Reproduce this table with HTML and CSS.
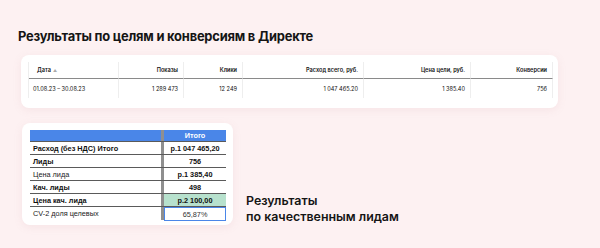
FILE: index.html
```html
<!DOCTYPE html>
<html lang="ru">
<head>
<meta charset="utf-8">
<link rel="stylesheet" href="styles.css">
</head>
<body>
<div class="page">
  <h1 class="title">Результаты по целям и конверсиям в Директе</h1>
  <div class="card report">
    <div class="grid">
      <div class="cell head left">Дата <span class="sort">▲</span></div>
      <div class="cell head">Показы</div>
      <div class="cell head">Клики</div>
      <div class="cell head">Расход всего, руб.</div>
      <div class="cell head">Цена цели, руб.</div>
      <div class="cell head">Конверсии</div>
      <div class="cell data left">01.08.23 – 30.08.23</div>
      <div class="cell data">1 289 473</div>
      <div class="cell data">12 249</div>
      <div class="cell data">1 047 465.20</div>
      <div class="cell data">1 385.40</div>
      <div class="cell data">756</div>
    </div>
  </div>
  <div class="bottom">
    <div class="card sheet">
      <div class="srow shead"><div class="c1"></div><div class="sep"></div><div class="c2">Итого</div></div>
      <div class="srow"><div class="c1 b">Расход (без НДС) Итого</div><div class="sep"></div><div class="c2 b">р.1 047 465,20</div></div>
      <div class="srow"><div class="c1 b">Лиды</div><div class="sep"></div><div class="c2 b">756</div></div>
      <div class="srow"><div class="c1">Цена лида</div><div class="sep"></div><div class="c2 b">р.1 385,40</div></div>
      <div class="srow"><div class="c1 b">Кач. лиды</div><div class="sep"></div><div class="c2 b">498</div></div>
      <div class="srow"><div class="c1 b">Цена кач. лида</div><div class="sep"></div><div class="c2 b green">р.2 100,00</div></div>
      <div class="srow last"><div class="c1">CV-2 доля целевых</div><div class="sep"></div><div class="c2 sel">65,87%</div></div>
    </div>
    <div class="caption">Результаты<br>по качественным лидам</div>
  </div>
</div>
</body>
</html>
```
FILE: styles.css
```css
* { box-sizing: border-box; }
body {
  margin: 0;
  background: #fdf1f2;
  font-family: Inter, "Noto Sans", sans-serif;
  color: #111;
}
.page {
  width: 600px;
  height: 248px;
  padding: 28px 0 0 18px;
  display: flex;
  flex-direction: column;
}
.title {
  margin: 0;
  font-size: 12.9px;
  line-height: 18px;
  font-weight: 700;
  letter-spacing: -0.2px;
  color: #151515;
}
.card {
  background: #fff;
  border-radius: 8px;
  box-shadow: 0 2px 8px rgba(200, 140, 150, 0.12);
}
.report {
  margin: 9px 0 0 3px;
  width: 537px;
  height: 53px;
  padding: 7px 6px 0 7px;
}
.grid {
  display: grid;
  grid-template-columns: 90px 65px 59px 121px 107px 82px;
  grid-template-rows: 17px 19px;
  border-left: 1px solid #eeeeee;
}
.cell {
  font-size: 5.6px;
  display: flex;
  align-items: center;
  justify-content: flex-end;
  padding: 0 5px;
  border-right: 1px solid #eeeeee;
  white-space: nowrap;
}
.cell.head {
  font-weight: 600;
  border-bottom: 1px solid #8a8a8a;
}
.cell.left { justify-content: flex-start; }
.cell.head.left { padding-left: 8px; }
.cell.data.left { padding-left: 4px; }
.sort { color: #aaa; font-size: 4px; margin-left: 2px; }
.bottom {
  display: flex;
  align-items: flex-end;
  margin: 15px 0 0 4px;
  gap: 13px;
}
.sheet {
  width: 211px;
  height: 102px;
  padding: 7px 7px 5px 8px;
  font-family: "Liberation Sans", Arial, sans-serif;
  font-size: 7.3px;
}
.srow {
  display: flex;
  height: 13px;
  border-bottom: 1px solid #5a5a5a;
}
.srow.shead {
  height: 12px;
  background: #4a86e8;
  color: #fff;
  font-weight: 700;
}
.srow.last { border-bottom: none; }
.c1 {
  width: 131px;
  padding-left: 3px;
  display: flex;
  align-items: center;
  color: #222;
}
.sep {
  width: 3px;
  background: #8f8f8f;
}
.c2 {
  flex: 1;
  display: flex;
  align-items: center;
  justify-content: center;
  color: #222;
}
.shead .c2 { color: #fff; }
.b { font-weight: 700; color: #111; }
.green { background: #b7e1cd; }
.sel { border: 1px solid #4a86e8; margin-bottom: -1px; color: #333; }
.caption {
  font-size: 12.4px;
  line-height: 15.5px;
  font-weight: 600;
  color: #151515;
  margin-bottom: 1px;
}
```
